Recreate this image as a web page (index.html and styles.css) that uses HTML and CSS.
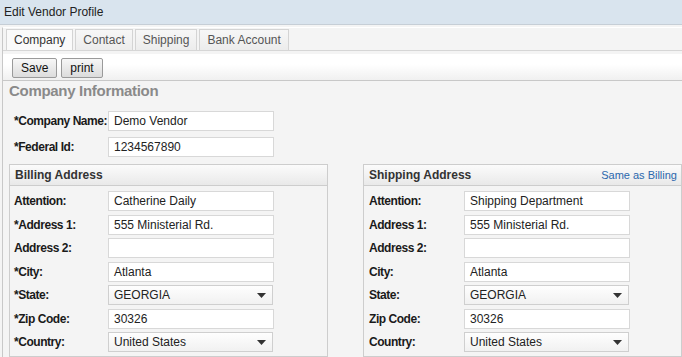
FILE: index.html
```html
<!DOCTYPE html>
<html>
  <head>
    <meta charset="UTF-8">
    <title>Edit Vendor Profile</title>
    <link rel="stylesheet" href="styles.css">
  </head>
  <body>
    <div class="titlebar">Edit Vendor Profile</div>
    <div class="window">
      <ul class="tabs">
        <li class="tab active">Company</li>
        <li class="tab">Contact</li>
        <li class="tab">Shipping</li>
        <li class="tab">Bank Account</li>
      </ul>
      <div class="toolbar">
        <button class="btn">Save</button>
        <button class="btn">print</button>
      </div>
      <h1 class="section-title">Company Information</h1>

      <div class="company-fields">
        <div class="row">
          <label>*Company Name:</label>
          <div class="field">Demo Vendor</div>
        </div>
        <div class="row">
          <label>*Federal Id:</label>
          <div class="field">1234567890</div>
        </div>
      </div>

      <div class="panels">
        <div class="panel">
          <div class="panel-head">
            <span>Billing Address</span>
          </div>
          <div class="panel-body">
            <div class="row"><label>Attention:</label><div class="field">Catherine Daily</div></div>
            <div class="row"><label>*Address 1:</label><div class="field">555 Ministerial Rd.</div></div>
            <div class="row"><label>Address 2:</label><div class="field"></div></div>
            <div class="row"><label>*City:</label><div class="field">Atlanta</div></div>
            <div class="row">
              <label>*State:</label>
              <div class="field select">GEORGIA
                <svg width="9" height="5" viewBox="0 0 9 5"><path d="M0 0h9L4.5 5z" fill="#333"/></svg>
              </div>
            </div>
            <div class="row"><label>*Zip Code:</label><div class="field">30326</div></div>
            <div class="row">
              <label>*Country:</label>
              <div class="field select">United States
                <svg width="9" height="5" viewBox="0 0 9 5"><path d="M0 0h9L4.5 5z" fill="#333"/></svg>
              </div>
            </div>
          </div>
        </div>

        <div class="panel shipping">
          <div class="panel-head">
            <span>Shipping Address</span>
            <a href="#" class="same-link">Same as Billing</a>
          </div>
          <div class="panel-body">
            <div class="row"><label>Attention:</label><div class="field">Shipping Department</div></div>
            <div class="row"><label>Address 1:</label><div class="field">555 Ministerial Rd.</div></div>
            <div class="row"><label>Address 2:</label><div class="field"></div></div>
            <div class="row"><label>City:</label><div class="field">Atlanta</div></div>
            <div class="row">
              <label>State:</label>
              <div class="field select">GEORGIA
                <svg width="9" height="5" viewBox="0 0 9 5"><path d="M0 0h9L4.5 5z" fill="#333"/></svg>
              </div>
            </div>
            <div class="row"><label>Zip Code:</label><div class="field">30326</div></div>
            <div class="row">
              <label>Country:</label>
              <div class="field select">United States
                <svg width="9" height="5" viewBox="0 0 9 5"><path d="M0 0h9L4.5 5z" fill="#333"/></svg>
              </div>
            </div>
          </div>
        </div>
      </div>
    </div>
  </body>
</html>
```

FILE: styles.css
```css
body {
  margin: 0;
  font-family: "Liberation Sans", Arial, sans-serif;
  font-size: 12px;
  color: #222;
  background-color: #f4f4f4;
  overflow: hidden;
}

.titlebar {
  height: 24px;
  line-height: 24px;
  padding-left: 4px;
  background-color: #d9e4ee;
  border-bottom: 1px solid #c6ced6;
  color: #222;
}

.window {
  margin: 2px 0 0 2px;
  border-left: 1px solid #c8c8c8;
  border-top: 1px solid #fff;
}

.tabs {
  list-style: none;
  margin: 0;
  padding: 1px 0 0 3px;
  display: flex;
  gap: 2px;
  border-bottom: 1px solid #d6d6d6;
}

.tab {
  height: 20px;
  line-height: 20px;
  padding: 0 7px;
  color: #555;
  background: linear-gradient(#f7f7f7, #ececec);
  border: 1px solid #d4d4d4;
  border-bottom: none;
}

.tab.active {
  color: #333;
  background: #fafafa;
}

.toolbar {
  margin-top: 3px;
  padding: 4px 9px 2px;
  display: flex;
  gap: 4px;
  background: linear-gradient(#fff 40%, #f0f0f0);
  border-bottom: 1px solid #c8c8c8;
}

.btn {
  height: 20px;
  padding: 0 8px;
  font-family: "Liberation Sans", Arial, sans-serif;
  font-size: 12px;
  color: #111;
  background: linear-gradient(#f7f7f7, #dcdcdc);
  border: 1px solid #9a9a9a;
  border-radius: 2px;
}

.section-title {
  margin: 0;
  padding: 1px 6px 0;
  font-size: 15px;
  line-height: 18px;
  font-weight: bold;
  letter-spacing: -0.3px;
  color: #8a8a8a;
}

.company-fields {
  padding: 11px 0 0 11px;
  display: flex;
  flex-direction: column;
  gap: 6px;
}

.row {
  display: flex;
  align-items: center;
  height: 20px;
}

.row label {
  width: 94px;
  flex-shrink: 0;
  white-space: nowrap;
  font-weight: bold;
  letter-spacing: -0.45px;
  color: #1a1a1a;
}

.field {
  box-sizing: border-box;
  width: 166px;
  height: 20px;
  line-height: 18px;
  padding: 0 5px;
  background-color: #fff;
  border: 1px solid #d8d8d8;
  color: #222;
}

.field.select {
  width: 165px;
  display: flex;
  align-items: center;
  justify-content: space-between;
  padding-right: 6px;
  background: linear-gradient(#fefefe, #f1f1f1);
  border-color: #cfcfcf;
}

.panels {
  margin-top: 7px;
  padding-left: 6px;
  display: flex;
  gap: 35px;
}

.panel {
  width: 319px;
  box-sizing: border-box;
  border: 1px solid #cdcdcd;
  flex-shrink: 0;
}

.panel-head {
  height: 20px;
  line-height: 20px;
  padding: 0 4px 0 5px;
  display: flex;
  justify-content: space-between;
  background: linear-gradient(#fbfbfb, #e9e9e9);
  border-bottom: 1px solid #cdcdcd;
  font-weight: bold;
  color: #333;
}

.same-link {
  font-size: 11px;
  font-weight: normal;
  color: #2b68ad;
  text-decoration: none;
}

.panel-body {
  padding: 5px 4px 4px;
  display: flex;
  flex-direction: column;
  gap: 3.5px;
}

.shipping .panel-body {
  padding-left: 5px;
}

.shipping .row label {
  width: 95px;
}
```
